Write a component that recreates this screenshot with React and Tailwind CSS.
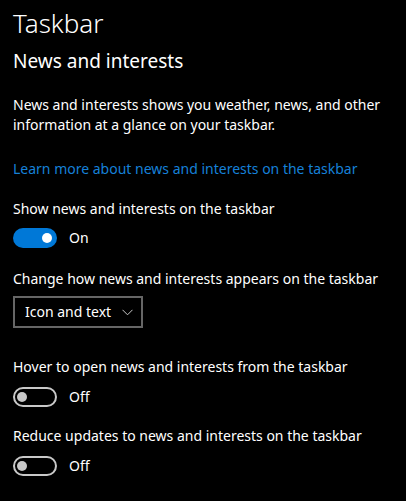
import React from "react";

function Toggle({ on }) {
  if (on) {
    return (
      <div className="flex h-[20px] w-[44px] items-center justify-end rounded-full bg-[#0078d7] pr-[5px]">
        <div className="h-[10px] w-[10px] rounded-full bg-white" />
      </div>
    );
  }
  return (
    <div className="flex h-[20px] w-[44px] items-center rounded-full border-2 border-[#c8c8c8] pl-[2px]">
      <div className="h-[10px] w-[10px] rounded-full bg-[#c8c8c8]" />
    </div>
  );
}

function ToggleRow({ label, on, gap }) {
  return (
    <div className="flex flex-col">
      <div className="leading-[20px]">{label}</div>
      <div className={`flex items-center gap-[12px] ${gap}`}>
        <Toggle on={on} />
        <span className="leading-[20px]">{on ? "On" : "Off"}</span>
      </div>
    </div>
  );
}

export default function App() {
  return (
    <div
      className="h-[501px] w-[406px] overflow-hidden bg-black pl-[13px] text-[14px] text-white"
      style={{ fontFamily: '"Noto Sans", "Open Sans", sans-serif' }}
    >
      <div className="pt-[5px] text-[26px] font-light leading-[36px]">Taskbar</div>
      <div className="mt-[7px] text-[19px] leading-[26px]">News and interests</div>

      <p className="mt-[21px] leading-[20px]">
        News and interests shows you weather, news, and other information at a glance on your taskbar.
      </p>

      <a className="mt-[24px] block leading-[20px] text-[#1681d8]" href="#">
        Learn more about news and interests on the taskbar
      </a>

      <div className="mt-[20px]">
        <ToggleRow label="Show news and interests on the taskbar" on gap="mt-[9px]" />
      </div>

      <div className="mt-[21px]">
        <div className="leading-[20px]">Change how news and interests appears on the taskbar</div>
        <div className="mt-[7px] flex h-[32px] w-[130px] items-center border-2 border-[#666666] pl-[10px] pr-[8px]">
          <span className="leading-[20px]">Icon and text</span>
          <svg className="ml-auto" width="11" height="7" viewBox="0 0 11 7" fill="none">
            <path d="M0.5 0.8L5.5 5.8L10.5 0.8" stroke="#c8c8c8" strokeWidth="1" />
          </svg>
        </div>
      </div>

      <div className="mt-[29px]">
        <ToggleRow label="Hover to open news and interests from the taskbar" gap="mt-[10px]" />
      </div>

      <div className="mt-[19px]">
        <ToggleRow label="Reduce updates to news and interests on the taskbar" gap="mt-[10px]" />
      </div>
    </div>
  );
}
